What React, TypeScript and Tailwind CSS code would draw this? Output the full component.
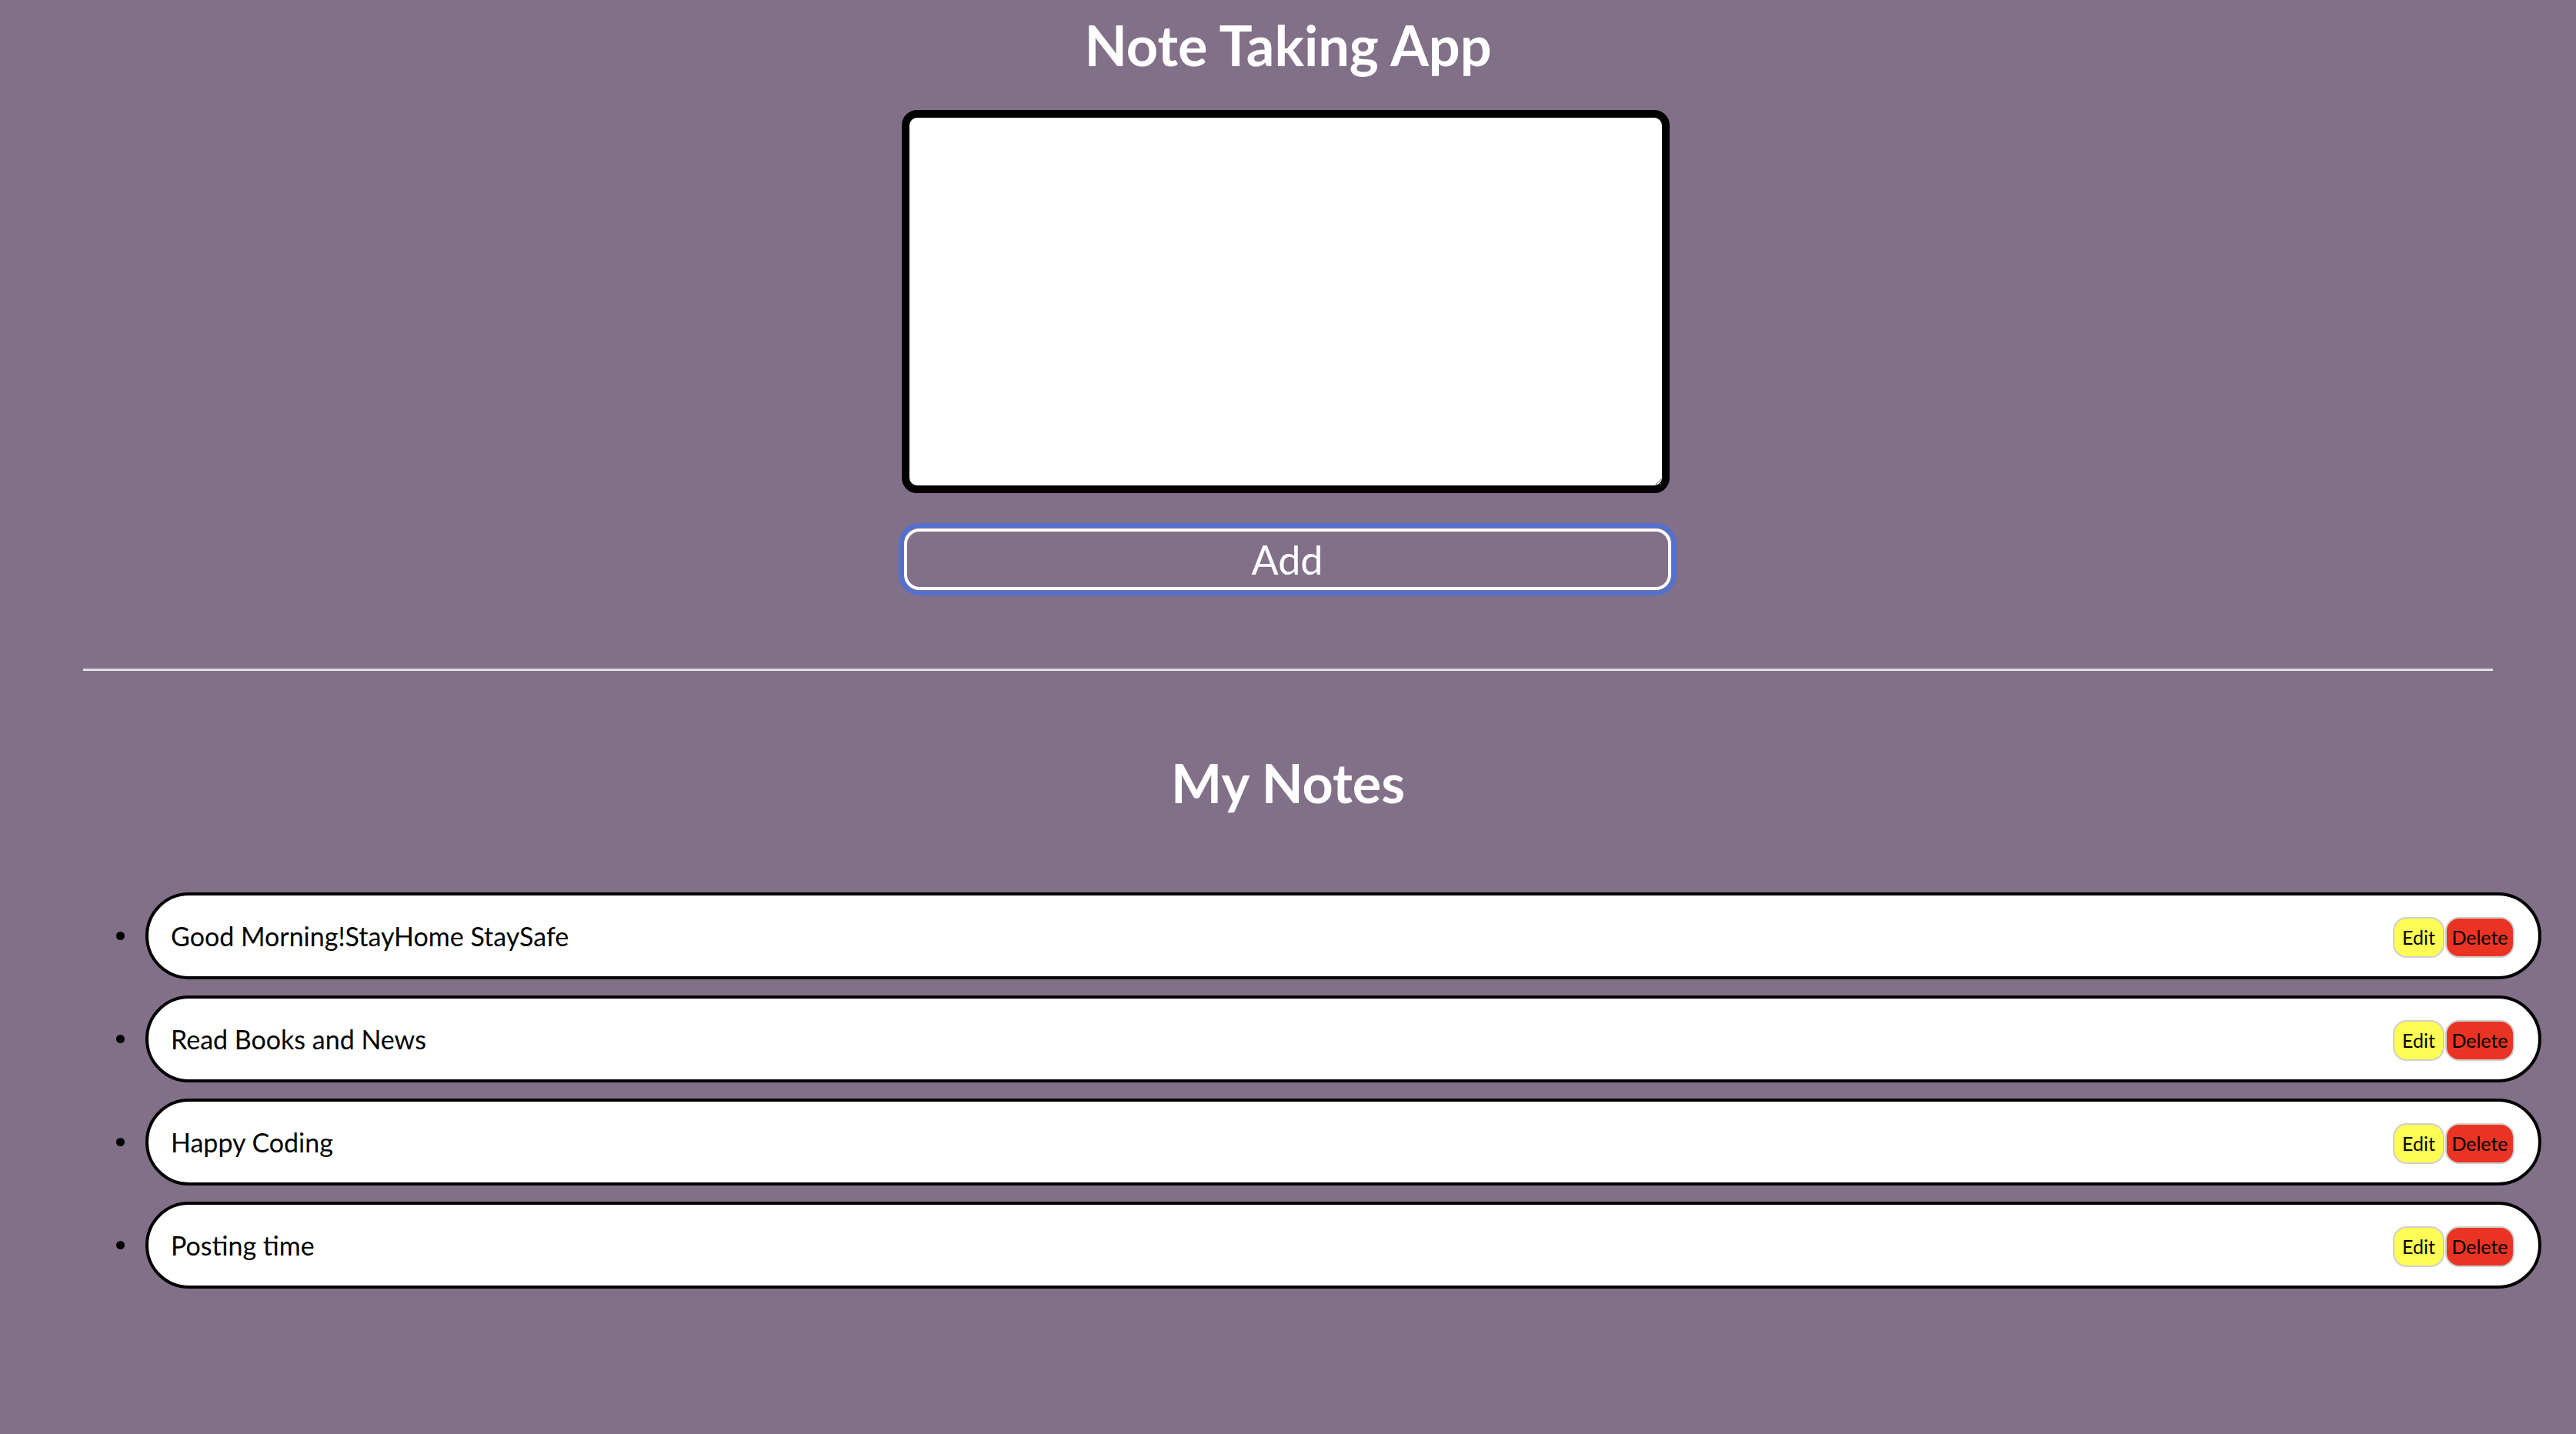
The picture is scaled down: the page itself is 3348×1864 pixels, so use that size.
import React from "react";

const notes = [
  "Good Morning!StayHome StaySafe",
  "Read Books and News",
  "Happy Coding",
  "Posting time",
];

function NoteItem({ text }: { text: string }) {
  return (
    <li className="flex items-center">
      <span className="w-[11px] h-[11px] rounded-full bg-black ml-[151px] mr-[27px] shrink-0" />
      <div className="flex-1 h-[113px] mr-[45px] flex items-center justify-between border-[4px] border-black rounded-full bg-white pl-[29px] pr-[31px]">
        <span className="text-[34px] text-black">{text}</span>
        <div className="flex items-center gap-[1px] mt-[4px]">
          <button className="w-[67px] h-[53px] bg-[#fdfd55] border-2 border-[#cfcfcf] rounded-[18px] text-[25px] text-black">
            Edit
          </button>
          <button className="w-[90px] h-[53px] bg-[#e93423] border-2 border-[#cfcfcf] rounded-[18px] text-[25px] text-black">
            Delete
          </button>
        </div>
      </div>
    </li>
  );
}

export default function App() {
  return (
    <div className="min-h-[1864px] w-full bg-[#817088] font-['Comic_Sans_MS','Lato',sans-serif]">
      <h1 className="pt-[18px] text-center text-[72px] leading-[80px] font-bold text-white">
        Note Taking App
      </h1>

      <div className="flex flex-col items-center">
        <textarea className="mt-[45px] mr-[6px] w-[998px] h-[498px] bg-white border-[10px] border-black rounded-[20px] outline-none p-2 resize" />
        <button className="mt-[46px] mr-[2px] w-[997px] h-[80px] border-4 border-white rounded-[20px] outline-[6px] outline-solid outline-[#5270d0] outline-offset-[1px] text-white text-[52px] leading-none">
          Add
        </button>
      </div>

      <hr className="mt-[101px] mx-[108px] h-0 border-0 border-t-2 border-t-[#a39aa7] border-b-2 border-b-[#eeeeee]" />

      <h2 className="mt-[108px] text-center text-[70px] leading-[74px] font-bold text-white">
        My Notes
      </h2>

      <ul className="mt-[106px] flex flex-col gap-[21px]">
        {notes.map((n, i) => (
          <NoteItem key={i} text={n} />
        ))}
      </ul>
    </div>
  );
}
